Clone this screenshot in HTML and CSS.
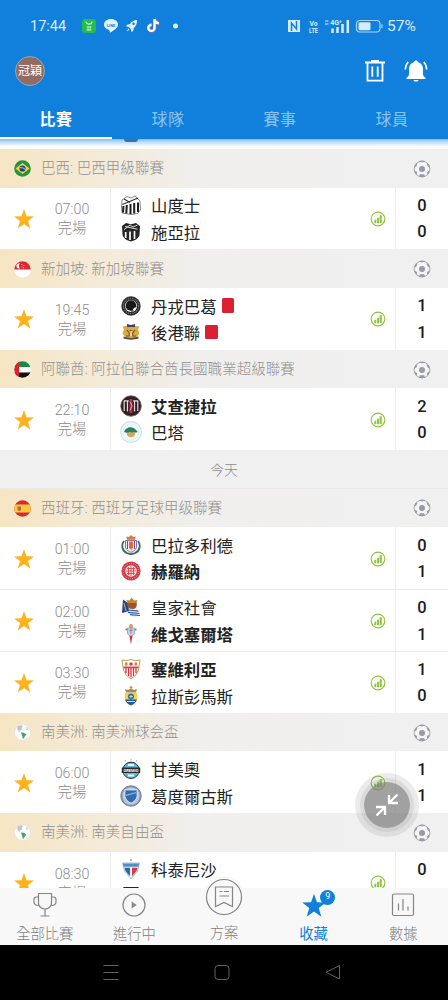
FILE: index.html
```html
<!DOCTYPE html>
<html lang="zh-Hant">
<head>
    <meta charset="UTF-8">
    <title>收藏</title>
    <link rel="stylesheet" href="styles.css">
</head>
<body>
    <!-- shared icons -->
    <svg class="defs">
        <symbol id="star" viewBox="0 0 20 20"><path d="M10 0l2.500 7.200 7.500.2-6 4.600 2.200 7.400L10 15.100l-6.200 4.300L6 12 0 7.400l7.500-.2z"/></symbol>
        <symbol id="ball" viewBox="0 0 18 18">
            <circle cx="9" cy="9" r="7.900" fill="#f4f5f7" stroke="#a3a7af" stroke-width="1"/>
            <circle cx="9" cy="9" r="3" fill="#979ba4"/>
            <path d="M6 1.300L9 2.500l3-1.200-1-.6H7zM.9 8l2.600-1.700L4.500 3.300 2.500 4zM17.100 8l-2.600-1.700-1-3 2 .7zM3.300 15l1-2.800-2.500-1.700.2 2zM14.700 15l-1-2.800 2.500-1.700-.2 2zM6 16.800l.8-2.500h4.400l.8 2.500-3 .5z" fill="#979ba4"/>
        </symbol>
        <symbol id="stats" viewBox="0 0 16 16">
            <circle cx="8" cy="8" r="6.800" fill="none" stroke="#8fc640" stroke-width="1.200"/>
            <path d="M4.300 8.800h2V12.200h-2zM7 6.800h2v5.400H7zM9.600 4.300h2.200v7.900H9.600z" fill="#8fc640"/>
        </symbol>
        <symbol id="globe" viewBox="0 0 17 17">
            <circle cx="8.500" cy="8.500" r="7.900" fill="#fff" stroke="#dedede" stroke-width=".7"/>
            <path d="M3.500 2.500L7 1l2 1.500L7.500 4 8 6 5.500 6.500 6 8.500 3.500 6z" fill="#bcc4cc"/>
            <path d="M12.500 2.500l2 2-1 2-2-1.500z" fill="#d6dade"/>
            <path d="M7 8.500l3 .2 2.300 1.800-1.500 2-1.800 2.700L8 11.500z" fill="#47a35b"/>
        </symbol>
    </svg>

    <div class="phone">
        <header class="header">
            <div class="status">
                <span class="clock">17:44</span>
                <svg class="status-apps" width="104" height="18" viewBox="0 0 104 18">
                    <rect x="1" y="2" width="14" height="14" rx="3" fill="#22bd4b"/>
                    <path d="M5 4.500c0 3.500 6 3.500 6 0" fill="none" stroke="#c9f5d4" stroke-width="1.200"/>
                    <path d="M5.500 10h5M5.500 13h5M7 9v5M9.200 9v5" stroke="#c9f5d4" stroke-width=".8"/>
                    <path d="M30 2c-4 0-7 2.400-7 5.600 0 2.700 2.300 4.800 5.300 5.300l.7 2.800c4.600-2.300 8-5 8-8.100C37 4.400 34 2 30 2z" fill="#dff2fd"/>
                    <text x="30" y="9.700" class="line-text">LINE</text>
                    <path d="M56 3c-3.300.2-5.500 1.500-7 4l-3 .8-.8 1.800 2.600.3 2.200 2.300.3 2.800 1.900-1 .6-2.900C55 9 56.200 6.500 56 3z" fill="#dff2fd"/>
                    <circle cx="52.600" cy="6.700" r="1.200" fill="#1180dc"/>
                    <path d="M47.500 11.500l-2 3 3-1.700z" fill="#dff2fd"/>
                    <g transform="translate(2.500 0)">
                        <path d="M71.500 2.500v8.800a3.100 3.100 0 1 1-3-3.100M71.500 2.500c.3 2.600 1.800 4 4.300 4.200" fill="none" stroke="#e8547c" stroke-width="2.400"/>
                        <path d="M71 2v8.800a3.100 3.100 0 1 1-3-3.100M71 2c.3 2.600 1.800 4 4.300 4.200" fill="none" stroke="#fff" stroke-width="2.400"/>
                    </g>
                    <circle cx="94.500" cy="9" r="2.500" fill="#dff2fd"/>
                </svg>
                <svg class="status-signal" width="98" height="18" viewBox="0 0 98 18">
                    <path d="M2 3h12v12H2z" fill="#d7ecfb"/>
                    <path d="M5.500 14V6l5 6V4" fill="none" stroke="#1180dc" stroke-width="1.500"/>
                    <text x="27.500" y="8.500" class="mini" textLength="8" lengthAdjust="spacingAndGlyphs">Vo</text>
                    <text x="27.500" y="15.500" class="mini" textLength="9" lengthAdjust="spacingAndGlyphs">LTE</text>
                    <path d="M39 4h3.500M39 7h3.500" stroke="#d7ecfb" stroke-width="1.100"/>
                    <text x="50" y="7.700" class="mini">4G⁺</text>
                    <path d="M46.500 11.500V16M51.500 10v6M56.500 7v9M61.800 3v13" stroke="#d7ecfb" stroke-width="2.500"/>
                    <rect x="70.500" y="3.500" width="23.500" height="11.500" rx="3.500" fill="none" stroke="#a9d5f8" stroke-width="1.200"/>
                    <rect x="72.500" y="5.300" width="12" height="8" rx="1.500" fill="#d7ecfb"/>
                    <path d="M96 7.500v3.500" stroke="#a9d5f8" stroke-width="1.200"/>
                </svg>
                <span class="percent">57%</span>
            </div>
            <div class="toolbar">
                <span class="avatar">冠穎</span>
                <svg class="trash" width="22" height="24" viewBox="0 0 22 24">
                    <path d="M1 3.500h20M7 1.800h8M3.500 3.500v18.200h15V3.500M8.300 7.500v10.200M13.700 7.500v10.200" fill="none" stroke="#fff" stroke-width="1.800"/>
                </svg>
                <svg width="24" height="24" viewBox="0 0 24 24">
                    <path d="M12 1.500c1 0 1.700.6 1.800 1.400C17 3.800 19 6.500 19 9.500v6c.3 1.700 1.500 2.600 2.500 3.300v1.200h-19v-1.200c1-.7 2.200-1.600 2.500-3.300v-6c0-3 2-5.700 5.200-6.600.1-.8.800-1.400 1.800-1.400z" fill="#fff"/>
                    <path d="M9.500 21h5c-.5 2.200-4.500 2.200-5 0z" fill="#fff"/>
                    <path d="M4.300 3C2.500 4.700 1.400 7.500 1.300 10.500M19.700 3c1.800 1.700 2.900 4.500 3 7.500" fill="none" stroke="#fff" stroke-width="1.500"/>
                </svg>
            </div>
            <nav class="tabs">
                <a class="tab active">比賽</a>
                <a class="tab">球隊</a>
                <a class="tab">賽事</a>
                <a class="tab">球員</a>
            </nav>
        </header>

        <main class="list">
            <div class="peek"><span class="peek-time"></span><span class="peek-crest"></span></div>

            <div class="league">
                <svg class="flag" viewBox="0 0 17 17"><circle cx="8.500" cy="8.500" r="8.300" fill="#23953f"/><path d="M8.500 3.100l7 5.400-7 5.400-7-5.400z" fill="#f4d82d"/><circle cx="8.500" cy="8.500" r="3.100" fill="#25408f"/><path d="M5.700 7.800c2-.4 4 0 5.600 1.700" fill="none" stroke="#fff" stroke-width=".7"/></svg>
                <span class="league-name">巴西: 巴西甲級聯賽</span>
                <svg class="ball"><use href="#ball"/></svg>
            </div>
            <div class="match">
                <svg class="star"><use href="#star"/></svg>
                <div class="time"><span>07:00</span><span>完場</span></div>
                <div class="teams">
                    <div class="team">
                        <svg class="crest" viewBox="0 0 20 20"><path d="M1 5l5-3.500 4 1.500 4-2L19 6l.5 9-3 3.500L10 19.500 1 18 .5 12z" fill="#fff" stroke="#555" stroke-width=".7"/><path d="M2.500 11l-.5 6.500M5.800 10l-.5 8.500M9.500 9v10M13.200 8v10.500M17 7.500v9.500" stroke="#1d1d1d" stroke-width="2"/><path d="M1.500 9.500L17 3M3 4l6 3.500" stroke="#333" stroke-width="1.300"/><path d="M4 .7h1M14.500.7h1" stroke="#d9bb54"/></svg>
                        <span>山度士</span>
                    </div>
                    <div class="team">
                        <svg class="crest" viewBox="0 0 20 20"><path d="M1 4l4-3 5 1.200L15 1l4 3-.5 9c-1 3.500-4.500 5.500-8.500 6.500-4-1-7.500-3-8.500-6.500z" fill="#252525"/><path d="M4.700 10v6M9 9.500v8.500M13.500 9v8" stroke="#fff" stroke-width="1.700"/><path d="M3 7.500L9 3l3 2 4.500-2M4 4.500l12.500 2.700" fill="none" stroke="#ddd"/></svg>
                        <span>施亞拉</span>
                    </div>
                </div>
                <svg class="stats"><use href="#stats"/></svg>
                <div class="score"><span>0</span><span>0</span></div>
            </div>

            <div class="league">
                <svg class="flag" viewBox="0 0 17 17"><circle cx="8.500" cy="8.500" r="8.300" fill="#fff"/><path d="M.2 8.500a8.300 8.300 0 0 1 16.600 0z" fill="#e32636"/><path d="M6 2.600a2.600 2.600 0 1 0 0 4.800 3 3 0 0 1 0-4.800z" fill="#fff"/><path d="M7.500 3.500h.8M9.500 4.500h.8M7.500 6h.8M9 6.800h.8" stroke="#fff" stroke-width=".8"/></svg>
                <span class="league-name">新加坡: 新加坡聯賽</span>
                <svg class="ball"><use href="#ball"/></svg>
            </div>
            <div class="match">
                <svg class="star"><use href="#star"/></svg>
                <div class="time"><span>19:45</span><span>完場</span></div>
                <div class="teams">
                    <div class="team">
                        <svg class="crest" viewBox="0 0 20 20"><circle cx="10" cy="10" r="9.700" fill="#2b2929"/><circle cx="10" cy="10" r="7.600" fill="none" stroke="#77736f" stroke-width="1.200" stroke-dasharray="1.500 .8"/><circle cx="10" cy="10" r="6" fill="#fff"/><path d="M5 8c2-5 8-5 10 0l.5 3-2.500 1-1.500 2.500-4.800-.5L4.500 11z" fill="#181818"/><path d="M8 14l5 .5-2 1.300z" fill="#222"/></svg>
                        <span>丹戎巴葛</span><i class="card"></i>
                    </div>
                    <div class="team">
                        <svg class="crest" viewBox="0 0 20 20"><path d="M1.500 4.500L6 4l4 1 4-1 4.500.5-1.500 3 1.500 4-3 4h-11l-3-4L3 7.500z" fill="#dba842"/><path d="M6 2l4 1 4-1v3H6z" fill="#33476a"/><path d="M6 8l2.500 3.500L8 14H5M14 8l-2.500 3.500.5 2.500h3M9 8l1 2 1-2" fill="none" stroke="#79521f" stroke-width="1.100"/><path d="M2.500 14.500c4 1.500 11 1.500 15 0v2c-4 1.500-11 1.500-15 0z" fill="#54514d"/><path d="M10 9v5" stroke="#f7e5b5" stroke-width="1.500"/></svg>
                        <span>後港聯</span><i class="card"></i>
                    </div>
                </div>
                <svg class="stats"><use href="#stats"/></svg>
                <div class="score"><span>1</span><span>1</span></div>
            </div>

            <div class="league">
                <svg class="flag" viewBox="0 0 17 17"><clipPath id="round"><circle cx="8.500" cy="8.500" r="8.300"/></clipPath><g clip-path="url(#round)"><path d="M0 0h17v6H0z" fill="#138d45"/><path d="M0 6h17v5.500H0z" fill="#fff"/><path d="M0 11.500h17V17H0z" fill="#111"/><path d="M0 0h5v17H0z" fill="#e11e2d"/></g></svg>
                <span class="league-name">阿聯酋: 阿拉伯聯合酋長國職業超級聯賽</span>
                <svg class="ball"><use href="#ball"/></svg>
            </div>
            <div class="match">
                <svg class="star"><use href="#star"/></svg>
                <div class="time"><span>22:10</span><span>完場</span></div>
                <div class="teams">
                    <div class="team win">
                        <svg class="crest big" viewBox="0 0 20 20"><circle cx="10" cy="10" r="9.300" fill="#2b2023" stroke="#725158" stroke-width=".8"/><path d="M3.800 5.500v9M6.800 5v10M13.200 5v10M16.200 5.500v9M3.500 5.300H8M12 5.300h4.500" stroke="#e4dcdc" stroke-width="1.100"/><path d="M10 3.500v13" stroke="#b82f43" stroke-width="2.600"/><path d="M9 6l2 4-2 4" fill="none" stroke="#f1d5d8" stroke-width=".7"/></svg>
                        <span>艾查捷拉</span>
                    </div>
                    <div class="team">
                        <svg class="crest big" viewBox="0 0 20 20"><circle cx="10" cy="10" r="9.400" fill="#f2fbfd" stroke="#cce4ec" stroke-width="1"/><circle cx="10" cy="10" r="7.200" fill="none" stroke="#a9d0db" stroke-width=".6" stroke-dasharray="1 1"/><path d="M5.500 9.500h9l-1.500 4.300L10 15l-3-1.200z" fill="#d3a962"/><path d="M3.800 10c.8-3 2.600-3 3.800-4 3-1 6 0 8.600 4-2 1-3-.5-4 .2-2 1-2.500-.5-4 0-1.500.4-2.500.8-4.400-.2z" fill="#278164"/></svg>
                        <span>巴塔</span>
                    </div>
                </div>
                <svg class="stats"><use href="#stats"/></svg>
                <div class="score"><span>2</span><span>0</span></div>
            </div>

            <div class="day">今天</div>

            <div class="league">
                <svg class="flag" viewBox="0 0 17 17"><g clip-path="url(#round)"><path d="M0 0h17v17H0z" fill="#d92930"/><path d="M0 4.600h17v7.800H0z" fill="#f8ca3a"/></g><path d="M3.500 6.500H7V10l-1.700 1.200L3.500 10z" fill="#bd6840"/></svg>
                <span class="league-name">西班牙: 西班牙足球甲级聯賽</span>
                <svg class="ball"><use href="#ball"/></svg>
            </div>
            <div class="match">
                <svg class="star"><use href="#star"/></svg>
                <div class="time"><span>01:00</span><span>完場</span></div>
                <div class="teams">
                    <div class="team">
                        <svg class="crest" viewBox="0 0 20 20"><path d="M3 6C0 10 1 16 6 18.200l4 1 4-1C19 16 20 10 17 6" fill="none" stroke="#39735a" stroke-width="1.900"/><path d="M4.500 5.500h11v7c-.7 2.500-3.500 4-5.500 4.800-2-.8-4.800-2.300-5.500-4.800z" fill="#f3eef5" stroke="#76478e" stroke-width=".8"/><path d="M6.500 6v8M13.500 6v8" stroke="#7a4997" stroke-width="1"/><path d="M8 6.500h4v6l-2 2.500-2-2.500z" fill="#e5653d"/><path d="M6 4.800L5.300 1.500l2.500.4L10 0l2.200 1.900 2.500-.4-.7 3.300z" fill="#d47e34"/></svg>
                        <span>巴拉多利德</span>
                    </div>
                    <div class="team win">
                        <svg class="crest" viewBox="0 0 20 20"><circle cx="10" cy="10" r="9.600" fill="#d23744"/><circle cx="10" cy="10" r="7.700" fill="none" stroke="#f0a3a8" stroke-width="1" stroke-dasharray="1 1"/><circle cx="10" cy="10" r="5.800" fill="#fbe5df"/><path d="M6 7.500h8M5 10h10M6 12.500h8M7.500 6v8M10 5v10M12.500 6v8" stroke="#d64750" stroke-width=".9"/></svg>
                        <span>赫羅納</span>
                    </div>
                </div>
                <svg class="stats"><use href="#stats"/></svg>
                <div class="score"><span>0</span><span>1</span></div>
            </div>
            <div class="match">
                <svg class="star"><use href="#star"/></svg>
                <div class="time"><span>02:00</span><span>完場</span></div>
                <div class="teams">
                    <div class="team">
                        <svg class="crest" viewBox="0 0 20 20"><path d="M2 2.500L8 6l8 5 3.500 8-7 1L7 16.500 1 16z" fill="#e9eef8"/><path d="M2 2.500L7 6l1 8-7 2z" fill="#24478e"/><path d="M7 13l10.500 1.200M7 15.300l11.500 1.200M9 17.700l10 .8" stroke="#2a56a5" stroke-width="1.200"/><path d="M6.500 6L5.500 3l3 .5L10.500.5l2.800 3 3-.5-1 4z" fill="#c78531"/><path d="M6.500 6h9c1 4-1 6-4.500 6s-5.500-3-4.500-6z" fill="#9b5531"/><path d="M3 6l2 8" stroke="#dfb44c" stroke-width="1"/></svg>
                        <span>皇家社會</span>
                    </div>
                    <div class="team win">
                        <svg class="crest" viewBox="0 0 20 20"><path d="M4.500 5.500h11" stroke="#e14b59" stroke-width="1.700"/><path d="M6.500 4h7v6L10 13l-3.500-3z" fill="#b2d8ed" stroke="#739dbb" stroke-width=".7"/><path d="M8 4l.3-3.500L10 0l1.700.5L12 4z" fill="#d79c61"/><path d="M8.500 11.800h3L10 20.500z" fill="#d92c42"/><path d="M10 4.500v5M8.500 6.500h3" stroke="#e05864" stroke-width=".9"/></svg>
                        <span>維戈塞爾塔</span>
                    </div>
                </div>
                <svg class="stats"><use href="#stats"/></svg>
                <div class="score"><span>0</span><span>1</span></div>
            </div>
            <div class="match">
                <svg class="star"><use href="#star"/></svg>
                <div class="time"><span>03:30</span><span>完場</span></div>
                <div class="teams">
                    <div class="team win">
                        <svg class="crest" viewBox="0 0 20 20"><path d="M1 1Q6 2.500 10 .5q4 2 9 .5L17.500 11Q15.500 17 10 20 4.500 17 2.500 11z" fill="#fff" stroke="#c29a4d" stroke-width="1"/><path d="M5 9v5M7.600 9v8M10 9v9.500M12.500 9v8M15 9v5" stroke="#d63841" stroke-width="1.300"/><path d="M2.500 7.500h15v1.800h-15z" fill="#db4247"/><path d="M4 3.500h2.500v3H4zM13.500 3.500H16v3h-2.500z" fill="#c78441"/><circle cx="10" cy="5" r="1.800" fill="#d4424b"/></svg>
                        <span>塞維利亞</span>
                    </div>
                    <div class="team">
                        <svg class="crest" viewBox="0 0 20 20"><path d="M10 0v4M8.500 1.300h3" stroke="#b78d39" stroke-width="1"/><path d="M5 6.500L4 3l3 1 3-1.500L13 4l3-1-1 3.500z" fill="#a98a42"/><path d="M4 7h12v7c-1 3.500-4 4.800-6 5.700-2-.9-5-2.200-6-5.700z" fill="#f2d541"/><path d="M4.200 13.500h11.600c-.7 3.500-4 5-5.800 6-1.800-1-5-2.500-5.800-6z" fill="#225ba0"/><circle cx="10" cy="10.500" r="3" fill="#346db2"/><path d="M8.500 10.500h3M10 9v3M6 15.500h8" stroke="#e5e0b0" stroke-width="1"/></svg>
                        <span>拉斯彭馬斯</span>
                    </div>
                </div>
                <svg class="stats"><use href="#stats"/></svg>
                <div class="score"><span>1</span><span>0</span></div>
            </div>

            <div class="league">
                <svg class="flag"><use href="#globe"/></svg>
                <span class="league-name">南美洲: 南美洲球会盃</span>
                <svg class="ball"><use href="#ball"/></svg>
            </div>
            <div class="match">
                <svg class="star"><use href="#star"/></svg>
                <div class="time"><span>06:00</span><span>完場</span></div>
                <div class="teams">
                    <div class="team">
                        <svg class="crest" viewBox="0 0 20 20"><circle cx="10" cy="11.300" r="8.200" fill="#64b7d9" stroke="#222f3b" stroke-width="1"/><path d="M7 6h6M7 16.600h6" stroke="#e7f6fc" stroke-width="2"/><path d="M.8 8.500h18.400v5.500H.8z" fill="#252b31"/><text x="10" y="12.800" class="crest-text">GREMIO</text><path d="M4.500 1v1.500M10 0v1.500M15.500 1v1.500" stroke="#b5bdc2" stroke-width="1.200"/></svg>
                        <span>甘美奧</span>
                    </div>
                    <div class="team">
                        <svg class="crest big" viewBox="0 0 20 20"><circle cx="10" cy="10" r="9.300" fill="#8799b1" stroke="#606b7a" stroke-width=".7"/><circle cx="10" cy="10" r="7.900" fill="#b8c9df"/><path d="M4.500 4.500h11v6c-.8 3-3 5-5.500 6-2.500-1-4.700-3-5.500-6z" fill="#326caf" stroke="#eef4fb" stroke-width=".7"/><path d="M5.500 9.500l9-2.500" stroke="#8fb2dc" stroke-width="1.200"/></svg>
                        <span>葛度爾古斯</span>
                    </div>
                </div>
                <svg class="stats"><use href="#stats"/></svg>
                <div class="score"><span>1</span><span>1</span></div>
            </div>

            <div class="league">
                <svg class="flag"><use href="#globe"/></svg>
                <span class="league-name">南美洲: 南美自由盃</span>
                <svg class="ball"><use href="#ball"/></svg>
            </div>
            <div class="match">
                <svg class="star"><use href="#star"/></svg>
                <div class="time"><span>08:30</span><span>完場</span></div>
                <div class="teams">
                    <div class="team">
                        <svg class="crest" viewBox="0 0 20 20"><path d="M1.500 4h17l-2 8L10 19.800 3.500 12z" fill="#e9f0f8" stroke="#91adc9" stroke-width=".8"/><path d="M2 4.500h16l-.6 3.300H2.600z" fill="#538ec3"/><path d="M3.500 8.800H9v8.500L4.500 12z" fill="#2e66ad"/><path d="M11 8.800h5.500l-1 3.200L11 17.300z" fill="#d63c38"/><circle cx="10" cy="1" r="1" fill="#9aa0a6"/></svg>
                        <span>科泰尼沙</span>
                    </div>
                    <div class="team">
                        <svg class="crest" viewBox="0 0 20 20"><path d="M3 1.500h14v12l-7 4-7-4z" fill="#f5e534" stroke="#242424" stroke-width="1.200"/><path d="M6 4h2.500M12 4h2.500M3 7.500h14" stroke="#333" stroke-width="1.500"/></svg>
                    </div>
                </div>
                <svg class="stats"><use href="#stats"/></svg>
                <div class="score"><span>0</span><span></span></div>
            </div>
        </main>

        <nav class="bottom">
            <a class="item">
                <svg width="26" height="26" viewBox="0 0 26 26" class="outline"><path d="M6.500 1.500h13v9.500c0 3.500-3 6-6.500 6s-6.500-2.500-6.500-6zM6.500 5H4.500Q2 5 2 7.500V10c0 2.200 2 3.500 5 3.500M19.500 5h2Q24 5 24 7.500V10c0 2.200-2 3.500-5 3.500M13 17v7M8.500 24h9"/></svg>
                <span>全部比賽</span>
            </a>
            <a class="item">
                <svg width="26" height="26" viewBox="0 0 26 26" class="outline"><circle cx="13" cy="13" r="11"/><path d="M10.700 9.500v7l5-3.500z" fill="#8a8a8a" stroke="none"/></svg>
                <span>進行中</span>
            </a>
            <a class="item raised">
                <svg width="42" height="42" viewBox="0 0 42 42" class="outline"><circle cx="21" cy="21" r="20.500" fill="#f8f8f8" stroke="none"/><circle cx="21" cy="21" r="17.500"/><path d="M12.500 11h17v19.500L21 26.500l-8.500 4zM16.500 15.500h3M21 15.500h5M16.500 20h9.500"/></svg>
                <span>方案</span>
            </a>
            <a class="item current">
                <svg width="26" height="26" viewBox="-1 -1.500 22 22"><use href="#star" width="20" height="20"/></svg>
                <span>收藏</span>
                <b class="badge">9</b>
            </a>
            <a class="item">
                <svg width="26" height="26" viewBox="0 0 26 26" class="outline"><rect x="2.500" y="2" width="21" height="21.500" rx="1.500"/><path d="M8.500 11.500v7M13 7v11.500M18 14.500v4"/></svg>
                <span>數據</span>
            </a>
        </nav>

        <footer class="system">
            <svg width="18" height="18" viewBox="0 0 18 18"><path d="M1.500 2.500h15M1.500 9.500h15M1.500 16.500h15"/></svg>
            <svg width="18" height="18" viewBox="0 0 18 18"><rect x="2" y="2.500" width="14" height="14" rx="3"/></svg>
            <svg width="18" height="18" viewBox="0 0 18 18"><path d="M15.500 2.500v13.500L2 9.300z"/></svg>
        </footer>

        <div class="float">
            <svg width="24" height="24" viewBox="0 0 24 24"><path d="M22.500 1.500l-8 8M14 2v8h9M1.500 22.500l8-8M10 22v-8H1" fill="none" stroke="#fff" stroke-width="2.300"/></svg>
        </div>
    </div>
</body>
</html>
```
FILE: styles.css
```css
body {
    margin: 0;
    background: #000;
    font-family: Roboto, "Noto Sans CJK TC", sans-serif;
}

.defs {
    display: none;
}

.phone {
    position: relative;
    display: flex;
    flex-direction: column;
    width: 448px;
    height: 1000px;
    overflow: hidden;
}

.header {
    flex: none;
    height: 139px;
    background: #1180dc;
    color: #fff;
}

.status {
    display: flex;
    align-items: center;
    height: 18px;
    padding: 17px 0 0 30px;
    color: #d7ecfb;
    font-size: 15.5px;
}

.clock {
    width: 51px;
    font-size: 14.5px;
}

.status-signal {
    margin-left: 101px;
}

.percent {
    margin-left: 3px;
}

.mini {
    font: bold 7px Roboto, sans-serif;
    fill: #d7ecfb;
    text-anchor: middle;
}

.line-text {
    font: bold 4px Roboto, sans-serif;
    fill: #1180dc;
    text-anchor: middle;
}

.toolbar {
    display: flex;
    align-items: center;
    height: 32px;
    margin-top: 20px;
    padding: 0 20px 0 15px;
}

.avatar {
    width: 30px;
    height: 30px;
    box-sizing: border-box;
    border: 1.5px solid #8cabc6;
    border-radius: 50%;
    background: #946b60;
    font-size: 12px;
    line-height: 28px;
    text-align: center;
}

.trash {
    margin-left: auto;
    margin-right: 18px;
}

.tabs {
    display: flex;
    height: 52px;
}

.tab {
    flex: 1;
    box-sizing: border-box;
    padding-top: 7px;
    border-bottom: 2px solid transparent;
    color: #8cc3f1;
    font-size: 16px;
    letter-spacing: 0.5px;
    line-height: 51px;
    text-align: center;
}

.tab.active {
    border-bottom-color: #fff;
    color: #fff;
    font-weight: bold;
}

.list {
    flex: 1;
    min-height: 0;
    overflow: hidden;
    background: #fff;
}

.peek {
    display: flex;
    height: 10px;
    background: linear-gradient(#7fbdf5, #b2d8fa 25%, #fff 75%);
}

.peek-time {
    width: 124px;
}

.peek-crest {
    width: 14px;
    height: 3px;
    border-radius: 0 0 7px 7px;
    background: #486b9c;
}

.league {
    display: flex;
    align-items: center;
    box-sizing: border-box;
    height: 38.5px;
    padding: 1px 17px 0 14px;
    background: linear-gradient(90deg, #f6e5c3, #f4ead6 20%, #f0efee 45%, #f0f0f0);
    color: #919191;
}

.flag {
    width: 17px;
    height: 17px;
    margin-right: 10px;
}

.league-name {
    flex: 1;
    padding-top: 1px;
    font-size: 14.55px;
    font-weight: 300;
    line-height: 20px;
}

.ball {
    width: 18px;
    height: 18px;
}

.match {
    display: flex;
    align-items: stretch;
    box-sizing: border-box;
    height: 61.9px;
}

.match + .match {
    border-top: 1px solid #ececec;
}

.star {
    flex: none;
    align-self: center;
    width: 20px;
    height: 20px;
    padding: 1px 10px 0 14px;
    fill: #ffb21c;
}

.time {
    display: flex;
    flex-direction: column;
    justify-content: center;
    width: 56px;
    padding: 2px 10px 0 0;
    border-right: 1px solid #eee;
    color: #8c8c8c;
    font-size: 14.3px;
    font-weight: 300;
    line-height: 19px;
    text-align: center;
}

.teams {
    display: flex;
    flex: 1;
    flex-direction: column;
    justify-content: center;
    padding-left: 9px;
}

.team {
    display: flex;
    align-items: center;
    height: 26.5px;
    color: #222;
    font-size: 16.4px;
}

.team.win {
    font-weight: bold;
}

.crest {
    width: 20px;
    height: 20px;
    margin: 0 10px 0 1px;
}

.crest.big {
    width: 22px;
    height: 22px;
    margin: 0 9px 0 0;
}

.crest-text {
    font: bold 4px Roboto, sans-serif;
    fill: #fff;
    text-anchor: middle;
}

.card {
    width: 12.5px;
    height: 14.5px;
    margin-left: 5px;
    border-radius: 1.5px;
    background: #dc1f32;
}

.stats {
    align-self: center;
    width: 16px;
    height: 16px;
    margin-right: 9px;
    padding-top: 1px;
}

.score {
    display: flex;
    flex-direction: column;
    justify-content: center;
    width: 52px;
    padding-top: 2px;
    border-left: 1px solid #eee;
    color: #1c1c1c;
    font-size: 16.5px;
    font-weight: 500;
    line-height: 26.5px;
    text-align: center;
}

.score span {
    height: 26.5px;
}

.day {
    height: 38.5px;
    background: #f0f0f0;
    box-shadow: inset 0 -1px #e9e9e9;
    color: #8c8c8c;
    font-size: 14px;
    font-weight: 300;
    line-height: 41px;
    text-align: center;
}

.bottom {
    position: relative;
    display: flex;
    flex: none;
    height: 57px;
    background: #f8f8f8;
}

.item {
    position: relative;
    display: flex;
    flex: 1;
    flex-direction: column;
    align-items: center;
    padding-top: 4px;
    color: #808080;
    font-size: 14.3px;
    font-weight: 300;
    line-height: 20px;
}

.item span {
    margin-top: 6px;
}

.raised {
    margin-top: -16px;
}

.raised span {
    margin-top: 5px;
}

.outline {
    fill: none;
    stroke: #858585;
    stroke-width: 1.2;
}

.current {
    color: #1180dc;
    font-weight: 400;
    fill: #1180dc;
}

.badge {
    position: absolute;
    top: 2px;
    right: 23px;
    width: 15px;
    height: 15px;
    border-radius: 50%;
    background: #1180dc;
    color: #fff;
    font-size: 9px;
    font-weight: 400;
    line-height: 13px;
    text-align: center;
}

.system {
    display: flex;
    flex: none;
    justify-content: center;
    gap: 93px;
    height: 55px;
    padding: 18px 5px 0 0;
    box-sizing: border-box;
    background: #000;
    fill: none;
    stroke: #626262;
}

.float {
    position: absolute;
    top: 782px;
    left: 364px;
    display: flex;
    align-items: center;
    justify-content: center;
    width: 46px;
    height: 46px;
    border-radius: 50%;
    background: rgba(125, 125, 125, 0.72);
    box-shadow: 0 0 0 4px rgba(110, 110, 110, 0.12), 0 0 0 9px rgba(110, 110, 110, 0.14);
}
```
